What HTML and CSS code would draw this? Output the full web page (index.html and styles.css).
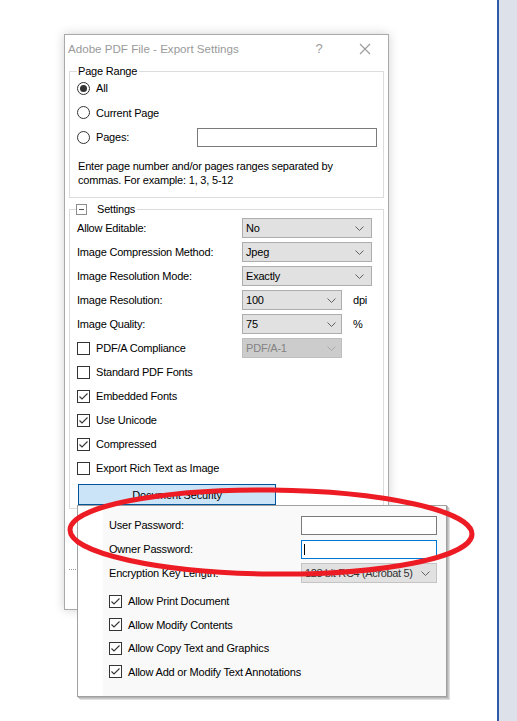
FILE: index.html
```html
<!DOCTYPE html>
<html>
<head>
<meta charset="utf-8">
<link rel="stylesheet" href="styles.css">
</head>
<body>
<div class="screen">
  <div class="desk">
    <div class="dialog">
      <div class="titlebar">
        <span class="title">Adobe PDF File - Export Settings</span>
        <span class="tbtn help">?</span>
        <span class="tbtn close"><svg width="12" height="12" viewBox="0 0 12 12"><path d="M1 1 L11 11 M11 1 L1 11" stroke="#9a9a9a" stroke-width="1.1" fill="none"/></svg></span>
      </div>
      <div class="dbody">
        <fieldset class="group range">
          <legend class="glabel">Page Range</legend>
          <div class="radios">
            <div class="row"><span class="radio on"></span><span class="lbl">All</span></div>
            <div class="row"><span class="radio"></span><span class="lbl">Current Page</span></div>
            <div class="row"><span class="radio"></span><span class="lbl">Pages:</span><span class="textbox pages"></span></div>
          </div>
          <p class="hint">Enter page number and/or pages ranges separated by<br>commas. For example: 1, 3, 5-12</p>
        </fieldset>
        <fieldset class="group settings">
          <legend class="glabel slabel"><span class="expander"></span><span>Settings</span></legend>
          <div class="rows">
            <div class="row"><span class="name">Allow Editable:</span><span class="combo wide"><span>No</span><svg class="chev" width="9" height="5" viewBox="0 0 9 5"><path d="M0.5 0.5 L4.5 4.5 L8.5 0.5" stroke="#606060" fill="none"/></svg></span></div>
            <div class="row"><span class="name">Image Compression Method:</span><span class="combo wide"><span>Jpeg</span><svg class="chev" width="9" height="5" viewBox="0 0 9 5"><path d="M0.5 0.5 L4.5 4.5 L8.5 0.5" stroke="#606060" fill="none"/></svg></span></div>
            <div class="row"><span class="name">Image Resolution Mode:</span><span class="combo wide"><span>Exactly</span><svg class="chev" width="9" height="5" viewBox="0 0 9 5"><path d="M0.5 0.5 L4.5 4.5 L8.5 0.5" stroke="#606060" fill="none"/></svg></span></div>
            <div class="row"><span class="name">Image Resolution:</span><span class="combo narrow"><span>100</span><svg class="chev" width="9" height="5" viewBox="0 0 9 5"><path d="M0.5 0.5 L4.5 4.5 L8.5 0.5" stroke="#606060" fill="none"/></svg></span><span class="unit">dpi</span></div>
            <div class="row"><span class="name">Image Quality:</span><span class="combo narrow"><span>75</span><svg class="chev" width="9" height="5" viewBox="0 0 9 5"><path d="M0.5 0.5 L4.5 4.5 L8.5 0.5" stroke="#606060" fill="none"/></svg></span><span class="unit">%</span></div>
            <div class="row"><span class="name check-name"><span class="cbox"></span><span class="lbl">PDF/A Compliance</span></span><span class="combo narrow disabled"><span>PDF/A-1</span><svg class="chev" width="9" height="5" viewBox="0 0 9 5"><path d="M0.5 0.5 L4.5 4.5 L8.5 0.5" stroke="#a8a8a8" fill="none"/></svg></span></div>
            <div class="row"><span class="cbox"></span><span class="lbl">Standard PDF Fonts</span></div>
            <div class="row"><span class="cbox"><svg width="11" height="11" viewBox="0 0 11 11"><path d="M1.5 5.5 L4 8 L9.5 2.5" stroke="#333" stroke-width="1.1" fill="none"/></svg></span><span class="lbl">Embedded Fonts</span></div>
            <div class="row"><span class="cbox"><svg width="11" height="11" viewBox="0 0 11 11"><path d="M1.5 5.5 L4 8 L9.5 2.5" stroke="#333" stroke-width="1.1" fill="none"/></svg></span><span class="lbl">Use Unicode</span></div>
            <div class="row"><span class="cbox"><svg width="11" height="11" viewBox="0 0 11 11"><path d="M1.5 5.5 L4 8 L9.5 2.5" stroke="#333" stroke-width="1.1" fill="none"/></svg></span><span class="lbl">Compressed</span></div>
            <div class="row"><span class="cbox"></span><span class="lbl">Export Rich Text as Image</span></div>
          </div>
          <div class="button">Document Security</div>
        </fieldset>
        <div class="dotted"></div>
      </div>
    </div>

    <div class="popup">
      <div class="strip"></div>
      <div class="panel">
        <div class="prow"><span class="pname">User Password:</span><span class="textbox pw"></span></div>
        <div class="prow"><span class="pname">Owner Password:</span><span class="textbox pw focus"><span class="caret"></span></span></div>
        <div class="prow"><span class="pname">Encryption Key Length:</span><span class="combo enc"><span class="enctext">128 bit RC4 (Acrobat 5)</span><svg class="chev" width="9" height="5" viewBox="0 0 9 5"><path d="M0.5 0.5 L4.5 4.5 L8.5 0.5" stroke="#606060" fill="none"/></svg></span></div>
        <div class="checks">
          <div class="crow"><span class="cbox"><svg width="11" height="11" viewBox="0 0 11 11"><path d="M1.5 5.5 L4 8 L9.5 2.5" stroke="#333" stroke-width="1.1" fill="none"/></svg></span><span class="lbl">Allow Print Document</span></div>
          <div class="crow"><span class="cbox"><svg width="11" height="11" viewBox="0 0 11 11"><path d="M1.5 5.5 L4 8 L9.5 2.5" stroke="#333" stroke-width="1.1" fill="none"/></svg></span><span class="lbl">Allow Modify Contents</span></div>
          <div class="crow"><span class="cbox"><svg width="11" height="11" viewBox="0 0 11 11"><path d="M1.5 5.5 L4 8 L9.5 2.5" stroke="#333" stroke-width="1.1" fill="none"/></svg></span><span class="lbl">Allow Copy Text and Graphics</span></div>
          <div class="crow"><span class="cbox"><svg width="11" height="11" viewBox="0 0 11 11"><path d="M1.5 5.5 L4 8 L9.5 2.5" stroke="#333" stroke-width="1.1" fill="none"/></svg></span><span class="lbl">Allow Add or Modify Text Annotations</span></div>
        </div>
      </div>
    </div>

    <svg class="mark" width="497" height="721" viewBox="0 0 497 721">
      <ellipse cx="271" cy="532" rx="201" ry="42" fill="none" stroke="#ed1c24" stroke-width="5" transform="rotate(0.6 271 532)"/>
    </svg>
  </div>
  <div class="side"></div>
</div>
</body>
</html>
```

FILE: styles.css
```css
html, body {
  margin: 0;
  padding: 0;
  background: #ffffff;
}
body {
  font-family: "Liberation Sans", Arial, sans-serif;
  font-size: 11px;
  letter-spacing: -0.2px;
  color: #000;
}
.screen {
  display: flex;
  width: 517px;
  height: 721px;
  overflow: hidden;
}
.desk {
  position: relative;
  flex: 0 0 497px;
  height: 721px;
}
.side {
  flex: 1;
  border-left: 2px solid #2f5aa8;
  background: #dde1ea;
}
.dialog {
  box-sizing: border-box;
  width: 325px;
  height: 576px;
  margin: 34px 0 0 64px;
  border: 1px solid #a9a9a9;
  background: #fff;
  box-shadow: 0 0 10px rgba(0,0,0,0.18);
  display: flex;
  flex-direction: column;
}
.titlebar {
  height: 27px;
  display: flex;
  align-items: center;
}
.title {
  flex: 1;
  padding-left: 3px;
  font-size: 11.6px;
  letter-spacing: 0;
  color: #9a9a9a;
}
.tbtn {
  width: 46px;
  height: 27px;
  display: flex;
  align-items: center;
  justify-content: center;
  color: #9a9a9a;
}
.help {
  font-size: 13px;
}
.dbody {
  padding: 0 4px;
  margin-top: 2px;
}
.group {
  margin: 0;
  border: 1px solid #dcdcdc;
  padding: 0 6px 0 7px;
  min-width: 0;
}
.glabel {
  padding: 0 2px 0 1px;
  line-height: 14px;
  height: 14px;
}
.range {
  padding-bottom: 10px;
}
.radios {
  display: flex;
  flex-direction: column;
  gap: 4.5px;
}
.row {
  height: 20px;
  display: flex;
  align-items: center;
}
.radio {
  box-sizing: border-box;
  width: 13px;
  height: 13px;
  border: 1px solid #333;
  border-radius: 50%;
  background: #fff;
  display: flex;
  align-items: center;
  justify-content: center;
  flex: 0 0 13px;
}
.radio.on::after {
  content: "";
  width: 7px;
  height: 7px;
  border-radius: 50%;
  background: #333;
}
.lbl {
  margin-left: 6px;
  white-space: nowrap;
}
.textbox {
  box-sizing: border-box;
  display: block;
  background: #fff;
  border: 1px solid #7a7a7a;
  height: 19px;
}
.pages {
  width: 180px;
  margin-left: auto;
}
.hint {
  margin: 12px 0 0 1px;
  line-height: 14px;
}
.settings {
  margin-top: 4px;
  padding-top: 2px;
  padding-bottom: 3px;
}
.slabel {
  display: flex;
  align-items: center;
  margin-left: -1px;
  padding-left: 0;
}
.expander {
  box-sizing: border-box;
  width: 11px;
  height: 11px;
  border: 1px solid #8c8c8c;
  margin-right: 10px;
  display: flex;
  align-items: center;
  justify-content: center;
}
.expander::after {
  content: "";
  width: 5px;
  height: 1px;
  background: #555;
}
.rows {
  display: flex;
  flex-direction: column;
  gap: 4px;
}
.name {
  flex: 0 0 165px;
  white-space: nowrap;
}
.check-name {
  display: flex;
  align-items: center;
}
.combo {
  box-sizing: border-box;
  height: 20px;
  background: #e1e1e1;
  border: 1px solid #adadad;
  display: flex;
  align-items: center;
  justify-content: space-between;
  padding: 0 7px 0 3px;
}
.combo.wide { width: 130px; }
.combo.narrow { width: 100px; padding-right: 5px; }
.combo.disabled {
  background: #cccccc;
  border-color: #bfbfbf;
  color: #838383;
}
.chev { flex: 0 0 9px; }
.unit { margin-left: 11px; }
.cbox {
  box-sizing: border-box;
  width: 13px;
  height: 13px;
  flex: 0 0 13px;
  border: 1px solid #333;
  background: #fff;
  display: flex;
  align-items: center;
  justify-content: center;
}
.cbox svg { display: block; }
.button {
  box-sizing: border-box;
  width: 198px;
  height: 21px;
  margin: 6px 0 0 1px;
  background: #cce4f7;
  border: 1px solid #005499;
  display: flex;
  align-items: center;
  justify-content: center;
}
.dotted {
  margin-top: 60px;
  border-top: 1px dotted #9a9a9a;
}
.popup {
  position: absolute;
  left: 77px;
  top: 505px;
  box-sizing: border-box;
  width: 370px;
  height: 192px;
  border: 1px solid #a0a0a0;
  background: #fff;
  box-shadow: 1px 1px 0 #b4b4b4, 2px 2px 0 #c8c8c8, 3px 3px 0 #e0e0e0;
  display: flex;
}
.strip {
  flex: 0 0 25px;
  background: #fff;
}
.panel {
  flex: 1;
  background: #f9f9f9;
  padding: 9px 9px 0 6px;
  display: flex;
  flex-direction: column;
  gap: 4px;
}
.prow {
  height: 20px;
  display: flex;
  align-items: center;
  justify-content: space-between;
}
.pname {
  white-space: nowrap;
}
.pw {
  width: 136px;
}
.pw.focus {
  border-color: #0078d7;
  position: relative;
}
.caret {
  position: absolute;
  left: 2px;
  top: 3px;
  width: 1px;
  height: 11px;
  background: #000;
}
.combo.enc {
  width: 136px;
  height: 20px;
  background: #e1e1e1;
  border-color: #c4c4c4;
  color: #333;
  padding-right: 6px;
}
.enctext {
  white-space: nowrap;
  letter-spacing: -0.35px;
}
.checks {
  margin-top: 4px;
  display: flex;
  flex-direction: column;
  gap: 3.5px;
}
.crow {
  height: 20px;
  display: flex;
  align-items: center;
}
.mark {
  position: absolute;
  left: 0;
  top: 0;
  pointer-events: none;
}
```
